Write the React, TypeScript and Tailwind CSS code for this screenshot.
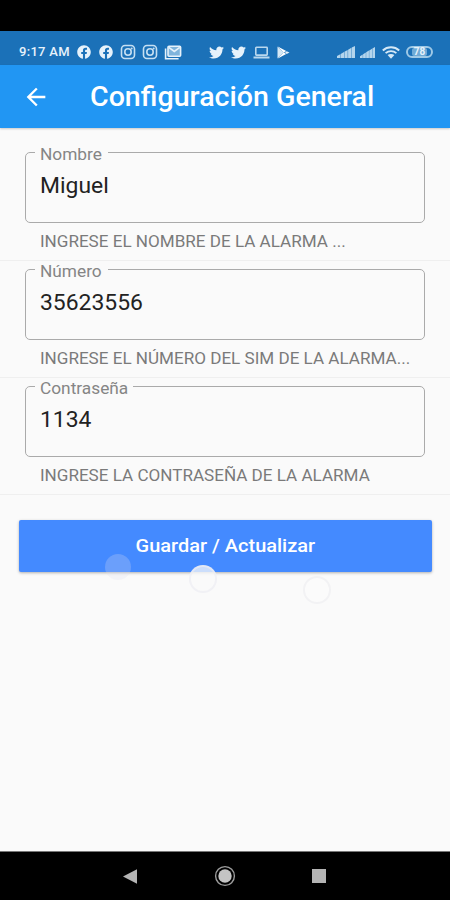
import React, { useState } from "react";
import { FaFacebook, FaTwitter } from "react-icons/fa";
import { MdArrowBack } from "react-icons/md";

interface FieldProps {
  label: string;
  value: string;
  helper: string;
  onChange: (value: string) => void;
}

const InstagramIcon = () => (
  <svg viewBox="0 0 16 16" className="size-4 text-[#c5dff2]" fill="none" stroke="currentColor">
    <rect x="1.500" y="1.500" width="13" height="13" rx="3.500" strokeWidth="1.600" />
    <circle cx="8" cy="8" r="3.200" strokeWidth="1.600" />
    <circle cx="11.700" cy="4.400" r="1" fill="currentColor" stroke="none" />
  </svg>
);

const MailStackIcon = () => (
  <svg viewBox="0 0 18 15" className="ml-[6px] h-[15px] w-[18px]" fill="none" stroke="currentColor">
    <path d="M1.600 3.500v10.200h13" strokeWidth="1.600" />
    <rect x="4" y="1.200" width="12.600" height="10" rx="1" fill="#7fb4dc" strokeWidth="1.600" />
    <path d="M4.800 2.400l5.500 4 5.500-4" strokeWidth="1.600" />
  </svg>
);

const LaptopIcon = () => (
  <svg viewBox="0 0 17 13" className="h-[13px] w-[17px] text-[#b9d8ee]" fill="none" stroke="currentColor">
    <rect x="2.800" y="1.300" width="11.400" height="7.800" rx=".6" strokeWidth="1.600" />
    <path d="M.5 11.500h16" strokeWidth="2" />
  </svg>
);

const PlayStoreIcon = () => (
  <svg viewBox="0 0 13 13" className="h-[13px] w-[13px]">
    <path d="M.5.5 6.500 6.500.5 12.500z" fill="#d5e8f5" />
    <path d="M.8.6 9.200 4.900 6.700 6.700z" fill="#fff" />
    <path d="M.8 12.400 9.200 8.100 6.700 6.300z" fill="#fff" />
    <path d="m9.600 5.200 2.900 1.300-2.900 1.400-1.500-1.400z" fill="#e3f0fa" />
  </svg>
);

const SignalIcon = ({ className }: { className: string }) => (
  <svg viewBox="0 0 18 12" preserveAspectRatio="none" className={className} fill="currentColor">
    <path d="M0 12V10l3.300-1.800V12zM3.700 12V7.900l3.300-1.900V12zM7.400 12V5.800l3.300-1.900V12zM11.100 12V3.700l3.300-1.900V12zM14.800 12V1.600L18 0v12z" />
  </svg>
);

const WifiIcon = () => (
  <svg viewBox="0 0 18 13" className="h-[13px] w-[18px]" fill="none" stroke="currentColor">
    <path d="M.8 4.400C5.400.2 12.600.2 17.200 4.400" strokeWidth="2" />
    <path d="M3.600 7.200C6.700 4.400 11.300 4.400 14.400 7.200" strokeWidth="1.800" />
    <path d="M5.600 9.100C7.500 7.500 10.500 7.500 12.400 9.100L9 12.700z" fill="currentColor" stroke="none" />
  </svg>
);

const StatusBar = () => (
  <div className="flex h-[34px] items-center bg-[#1b71b8] pt-2 pl-[19px] text-[#e6f2fb]">
    <span className="w-[58px] text-[13px] font-medium tracking-[0.3px] whitespace-nowrap">9:17 AM</span>
    <div className="flex items-center text-[14px]">
      <FaFacebook />
      <FaFacebook className="ml-2" />
      <span className="ml-[7px] flex gap-[6px]">
        <InstagramIcon />
        <InstagramIcon />
      </span>
      <MailStackIcon />
    </div>
    <div className="ml-[27px] flex items-center gap-[7px] text-[15px]">
      <FaTwitter />
      <FaTwitter />
      <LaptopIcon />
      <PlayStoreIcon />
    </div>
    <div className="ml-[47px] flex items-center text-[#b4d5ed]">
      <SignalIcon className="h-[12px] w-[18px]" />
      <SignalIcon className="ml-[5px] h-[11px] w-[15px]" />
      <span className="ml-[7px] text-[#d5e9f7]">
        <WifiIcon />
      </span>
      <span className="ml-[6px] flex h-[12px] w-[27px] items-center justify-center rounded-full border-2 border-[#9fc9e6]">
        <span className="flex h-[8px] w-[15px] items-center justify-center rounded-[2px] bg-[#6eaad6] text-[10px] leading-none font-bold text-[#e6f2fb]">
          78
        </span>
      </span>
    </div>
  </div>
);

const OutlinedField: React.FC<FieldProps> = ({ label, value, helper, onChange }) => (
  <div className="h-[117px] border-b border-[#efefef] px-[25px]">
    <fieldset className="h-[79px] rounded-[5px] border border-[#aaa]">
      <legend className="ml-[9px] h-[17px] pr-[11px] pl-[5px] text-[16px] leading-[21px] whitespace-nowrap text-[#858585]">
        <span className="inline-block origin-left scale-x-[1.08]">{label}</span>
      </legend>
      <input
        aria-label={label}
        value={value}
        onChange={(e) => onChange(e.target.value)}
        className="mt-[8px] ml-[14px] block h-8 w-[340px] origin-left scale-x-[1.04] bg-transparent text-[22px] text-[#222] outline-none"
      />
    </fieldset>
    <p className="mt-[9px] origin-left scale-x-[1.067] pl-[14px] text-[16px] leading-5 whitespace-nowrap text-[#7a7a7a]">
      {helper}
    </p>
  </div>
);

const NavigationBar = () => (
  <nav className="flex h-[49px] items-center border-t border-[#777] bg-black pl-[123px] text-[#b4b4b4]">
    <svg viewBox="0 0 14 15" className="h-[15px] w-[14px]" fill="currentColor">
      <path d="M0 7.500 14 .3v14.400z" />
    </svg>
    <svg viewBox="0 0 22 22" className="ml-[77px] size-[22px]">
      <circle cx="11" cy="11" r="9.400" fill="none" stroke="#9d9d9d" strokeWidth="1.400" />
      <circle cx="11" cy="11" r="6.700" fill="#c4c4c4" />
    </svg>
    <span className="ml-[76px] size-[14px] bg-[#b4b4b4]" />
  </nav>
);

export default function App() {
  const [name, setName] = useState("Miguel");
  const [phone, setPhone] = useState("35623556");
  const [password, setPassword] = useState("1134");

  return (
    <div className="flex h-[900px] w-[450px] flex-col overflow-hidden bg-[#fafafa] font-[Roboto,sans-serif]">
      <div className="h-[31px] bg-black" />
      <StatusBar />
      <header className="flex h-[63px] items-center bg-[#2196f3] pl-[22px] text-white shadow-[0_1px_2px_rgba(0,0,0,0.2)]">
        <MdArrowBack className="size-[28px]" />
        <h1 className="ml-10 origin-left scale-x-[1.058] pt-0.5 text-[27px] font-medium whitespace-nowrap">
          Configuración General
        </h1>
      </header>

      <main className="flex-1 pt-4">
        <OutlinedField
          label="Nombre"
          value={name}
          onChange={setName}
          helper="INGRESE EL NOMBRE DE LA ALARMA ..."
        />
        <OutlinedField
          label="Número"
          value={phone}
          onChange={setPhone}
          helper="INGRESE EL NÚMERO DEL SIM DE LA ALARMA..."
        />
        <OutlinedField
          label="Contraseña"
          value={password}
          onChange={setPassword}
          helper="INGRESE LA CONTRASEÑA DE LA ALARMA"
        />

        <div className="relative mt-[25px] pr-[18px] pl-[19px]">
          <button
            type="button"
            className="h-[52px] w-full rounded-[2px] bg-[#448aff] text-[19px] font-medium text-white shadow-[0_1px_3px_rgba(0,0,0,0.3)]"
          >
            <span className="inline-block scale-x-[1.052]">Guardar / Actualizar</span>
          </button>
          {/* touch ripples */}
          <span className="absolute top-[34px] left-[105px] size-[26px] rounded-full bg-[#dedef0]/25" />
          <span className="absolute top-[45px] left-[189px] size-[28px] rounded-full border-2 border-[#ececf2]/70 bg-[#fafafa]/75" />
          <span className="absolute top-[56px] left-[303px] size-[28px] rounded-full border-2 border-[#f2f2f4] bg-[#fbfbfb]" />
        </div>
      </main>

      <NavigationBar />
    </div>
  );
}
